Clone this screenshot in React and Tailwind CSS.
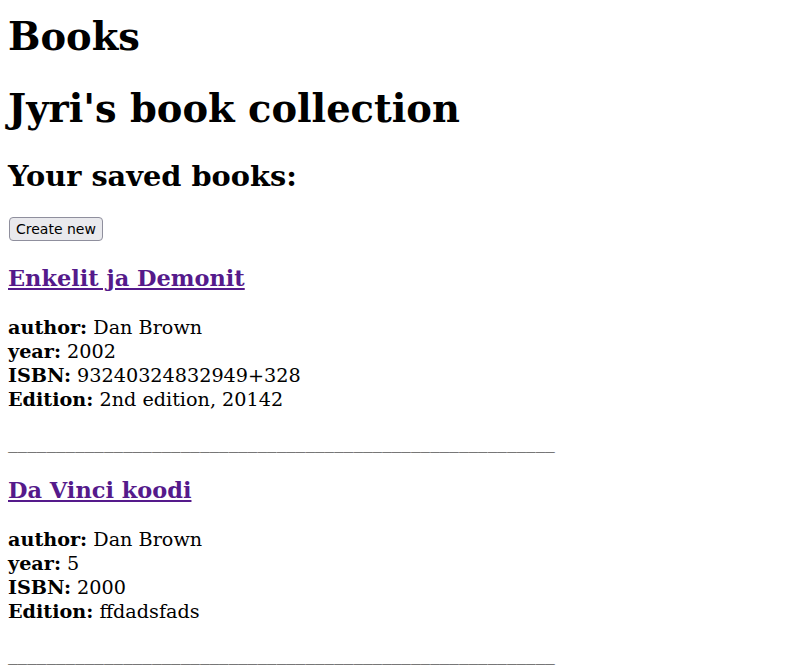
const books = [
    {
        title: "Enkelit ja Demonit",
        author: "Dan Brown",
        year: "2002",
        isbn: "93240324832949+328",
        edition: "2nd edition, 20142",
    },
    {
        title: "Da Vinci koodi",
        author: "Dan Brown",
        year: "5",
        isbn: "2000",
        edition: "ffdadsfads",
    },
];

function BookItem({ book }) {
    return (
        <div>
            {/* Otsikko linkkinä */}
            <h3 className="mt-[24px] text-[22.46px] leading-[27px] font-bold">
                <a href="#" className="text-[#551a8b] underline">
                    {book.title}
                </a>
            </h3>
            <p className="mt-[24px] leading-[24px]">
                <b>author:</b> {book.author}
                <br />
                <b>year:</b> {book.year}
                <br />
                <b>ISBN:</b> {book.isbn}
                <br />
                <b>Edition:</b> {book.edition}
            </p>
            <p className="mt-[18px] leading-[23px]">
                {"_".repeat(57)}
            </p>
        </div>
    );
}

export default function App() {
    return (
        <div className="bg-white min-h-screen px-2 pt-[13px] text-[19.2px] text-black font-['DejaVu_Serif',serif]">
            <h1 className="text-[38.4px] leading-[47px] font-bold">Books</h1>
            <h1 className="mt-[25px] text-[38.4px] leading-[47px] font-bold">Jyri's book collection</h1>
            <h2 className="mt-[27px] text-[28.8px] leading-[34px] font-bold">Your saved books:</h2>
            <div className="mt-[24px] flex">
                <button className="ml-px h-[24px] px-[6px] rounded-[4px] border border-[#8f8f9d] bg-[#e9e9ed] text-[14px] leading-none font-['DejaVu_Sans',sans-serif]">
                    Create new
                </button>
            </div>
            {books.map((book) => (
                <BookItem key={book.title} book={book} />
            ))}
        </div>
    );
}
